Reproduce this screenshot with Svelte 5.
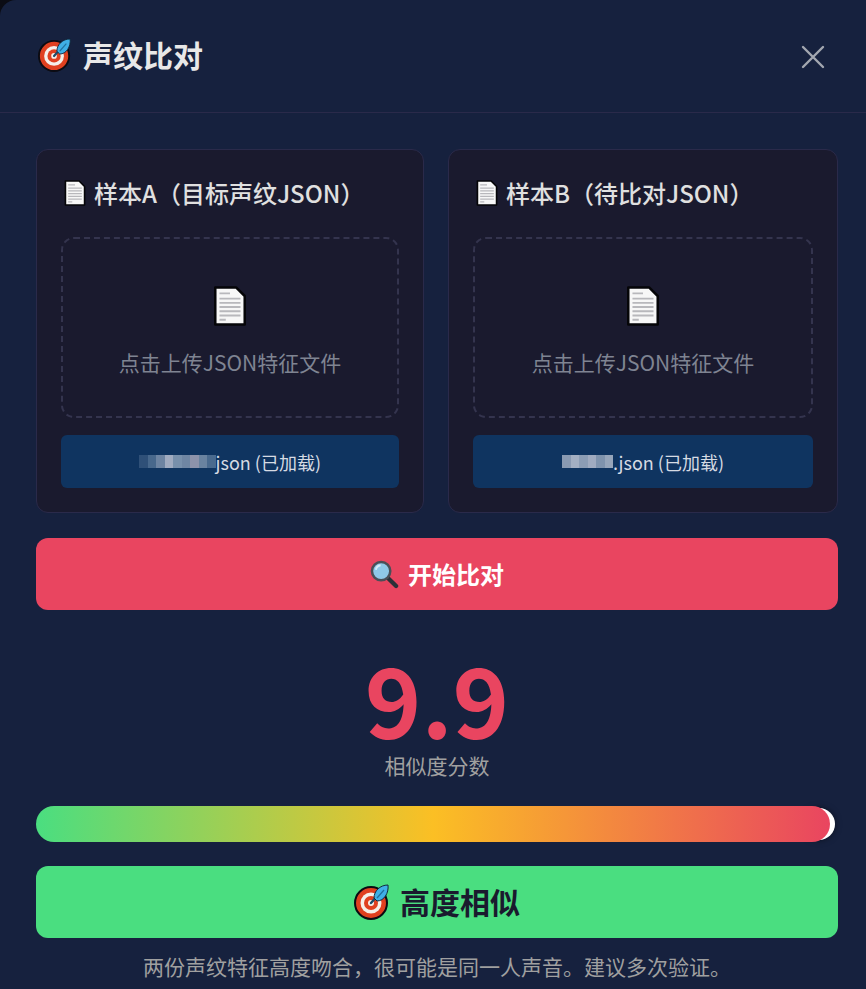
<script>
	const score = 9.9;
	const samples = [
		{
			title: '样本A（目标声纹JSON）',
			blocks: ['#2f5078', '#48688c', '#6d84a2', '#a0abc0', '#7890ab', '#6f86a3', '#8d93ab', '#6a83a0', '#4a6a8e'],
			suffix: 'json (已加载)'
		},
		{
			title: '样本B（待比对JSON）',
			blocks: ['#8a9ab2', '#a3afc2', '#8c9db5', '#a0abc0', '#7f93ad', '#96a5ba'],
			suffix: '.json (已加载)'
		}
	];
</script>

{#snippet targetIcon(size)}
	<svg class="emoji" width={size} height={size} viewBox="0 0 36 36">
		<circle cx="17" cy="19" r="16" fill="#e0401f" stroke="#0b0b12" stroke-width="2" />
		<circle cx="17" cy="19" r="10.5" fill="#f5efe9" />
		<circle cx="17" cy="19" r="7" fill="#e0401f" />
		<circle cx="17" cy="19" r="3" fill="#f5efe9" />
		<path d="M17 19 L24 11" stroke="#1c4a68" stroke-width="2.4" stroke-linecap="round" />
		<path d="M20 14 C20 7 26 1 34 1 C35 9 30 17 23 17 Z" fill="#3fb0e6" stroke="#12283c" stroke-width="1" />
		<path d="M23 14 L30 6" stroke="#1f6f9e" stroke-width="1.2" />
	</svg>
{/snippet}

{#snippet docIcon(w, h)}
	<svg class="emoji" width={w} height={h} viewBox="0 0 32 38">
		<path d="M2 1.5 H22 L30 9.5 V36.5 H2 Z" fill="#f7f7f7" stroke="#050508" stroke-width="2.4" stroke-linejoin="round" />
		<path d="M6 7 H16 M6 12 H26 M6 16 H26 M6 20 H26 M6 24 H26 M6 28 H26 M6 32 H12" stroke="#b8b8bc" stroke-width="1.8" />
	</svg>
{/snippet}

<div class="modal">
	<header>
		<h2>{@render targetIcon(34)}<span>声纹比对</span></h2>
		<button class="close" aria-label="关闭">
			<svg width="26" height="26" viewBox="0 0 26 26">
				<path d="M3 3 L23 23 M23 3 L3 23" stroke="#a3a7b0" stroke-width="2.4" stroke-linecap="round" />
			</svg>
		</button>
	</header>

	<div class="body">
		<div class="samples">
			{#each samples as s}
				<div class="card">
					<h3>{@render docIcon(22, 26)}<span>{s.title}</span></h3>
					<div class="drop">
						{@render docIcon(34, 40)}
						<p>点击上传JSON特征文件</p>
					</div>
					<div class="loaded">
						<span class="mosaic">
							{#each s.blocks as c}
								<i style="background:{c}"></i>
							{/each}
						</span><span>{s.suffix}</span>
					</div>
				</div>
			{/each}
		</div>

		<button class="start">
			<svg class="emoji" width="29" height="29" viewBox="0 0 30 30">
				<path d="M18 18 L27 27" stroke="#2b3038" stroke-width="4.4" stroke-linecap="round" />
				<circle cx="11.5" cy="11.5" r="9.5" fill="#8fc8e8" stroke="#4a4f58" stroke-width="2.6" />
				<path d="M6 10 A6 6 0 0 1 11 5.5" stroke="#d5ecf8" stroke-width="2" fill="none" />
			</svg>
			<span>开始比对</span>
		</button>

		<div class="score">
			<div class="value">{score}</div>
			<div class="label">相似度分数</div>
		</div>

		<div class="track">
			<div class="marker" style="left:{score * 10}%"></div>
			<div class="fill" style="width:{score * 10}%"></div>
		</div>

		<div class="verdict">{@render targetIcon(36)}<span>高度相似</span></div>
		<p class="desc">两份声纹特征高度吻合，很可能是同一人声音。建议多次验证。</p>
	</div>
</div>

<style>
	:global(body) {
		margin: 0;
		background: #0b0c14;
		font-family: 'Noto Sans CJK SC', 'Noto Sans', sans-serif;
		overflow: hidden;
	}

	.modal {
		height: 989px;
		background: #16213e;
		border-radius: 16px 0 0 0;
		color: #e8e8e8;
		overflow: hidden;
	}

	.emoji {
		flex: none;
		display: block;
	}

	header {
		height: 112px;
		padding: 0 40px 0 38px;
		display: flex;
		justify-content: space-between;
		align-items: center;
		border-bottom: 1px solid #2a2a4a;
		box-sizing: content-box;
	}

	h2 {
		margin: -3px 0 0;
		display: flex;
		align-items: center;
		gap: 11px;
		font-size: 30px;
		font-weight: 700;
		line-height: 1;
		color: #e8e8e8;
	}

	h2 span {
		margin-top: -2px;
	}

	.close {
		padding: 0;
		margin: 2px 0 0 0;
		background: none;
		border: none;
		display: flex;
	}

	.body {
		padding: 36px 28px 0 36px;
	}

	.samples {
		display: grid;
		grid-template-columns: 388px 390px;
		gap: 24px;
	}

	.card {
		height: 364px;
		box-sizing: border-box;
		background: #1a1a2e;
		border: 1px solid #2a2a4a;
		border-radius: 12px;
		padding: 24px;
	}

	h3 {
		margin: 0 0 25px;
		height: 38px;
		padding-left: 3px;
		display: flex;
		align-items: center;
		gap: 8px;
		font-size: 24px;
		font-weight: 500;
		line-height: 38px;
		color: #e0e0e0;
		white-space: nowrap;
	}

	.drop {
		height: 181px;
		box-sizing: border-box;
		border: 2px dashed #34344e;
		border-radius: 13px;
		display: flex;
		flex-direction: column;
		align-items: center;
		padding-top: 47px;
	}

	.drop p {
		margin: 21px 0 0;
		font-size: 21px;
		line-height: 30px;
		color: #7f8492;
	}

	.loaded {
		margin-top: 17px;
		height: 53px;
		background: #0f3460;
		border-radius: 6px;
		display: flex;
		align-items: center;
		justify-content: center;
		font-size: 18px;
		color: #d6dbe3;
	}

	.mosaic {
		display: inline-flex;
		height: 13px;
		filter: blur(0.7px);
	}

	.mosaic i {
		display: block;
		width: 8.5px;
		height: 100%;
	}

	.start {
		margin-top: 25px;
		width: 100%;
		height: 72px;
		background: #e94560;
		border: none;
		border-radius: 12px;
		display: flex;
		align-items: center;
		justify-content: center;
		gap: 9px;
		font-family: inherit;
		font-size: 24px;
		font-weight: 700;
		color: #fff;
	}

	.start span {
		margin-top: -2px;
	}

	.score {
		margin-top: 40px;
		text-align: center;
	}

	.value {
		font-size: 96px;
		font-weight: 700;
		line-height: 96px;
		color: #e94560;
	}

	.label {
		margin-top: 5px;
		font-size: 21px;
		line-height: 28px;
		color: #a0a0a0;
	}

	.track {
		position: relative;
		margin-top: 27px;
		height: 36px;
	}

	.fill {
		position: absolute;
		inset: 0 auto 0 0;
		border-radius: 18px;
		background: linear-gradient(90deg, #4ade80, #fbbf24 50%, #e94560);
	}

	.marker {
		position: absolute;
		top: 2px;
		bottom: 2px;
		width: 32px;
		margin-left: -27px;
		border-radius: 16px;
		background: #fff;
		box-shadow: 0 0 6px rgba(0, 0, 0, 0.5);
	}

	.verdict {
		margin-top: 24px;
		height: 72px;
		background: #4ade80;
		border-radius: 12px;
		display: flex;
		align-items: center;
		justify-content: center;
		gap: 10px;
		font-size: 30px;
		font-weight: 700;
		color: #1a1a2e;
	}

	.verdict span {
		margin-top: -3px;
	}

	.desc {
		margin: 13px 0 0;
		text-align: center;
		font-size: 21px;
		line-height: 30px;
		color: #a0a0a0;
	}
</style>
